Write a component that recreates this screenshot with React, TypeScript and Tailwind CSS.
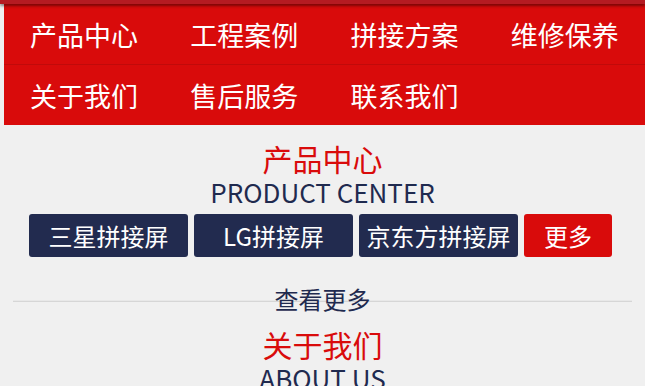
import React from "react";

const cjk = { fontFamily: '"Microsoft YaHei", "Noto Sans CJK SC", "Noto Sans", sans-serif' };

const navRow1 = ["产品中心", "工程案例", "拼接方案", "维修保养"];
const navRow2 = ["关于我们", "售后服务", "联系我们"];

export default function App() {
  return (
    <div className="w-[645px] h-[386px] overflow-hidden bg-[#f0f0f0]" style={cjk}>
      <div className="h-[4px] bg-[#b51b22] shadow-[0_2px_3px_rgba(0,0,0,0.45)] relative z-10" />
      <div className="ml-[4px] bg-[#d90b0b]">
        <div className="grid grid-cols-4 h-[61px] border-b border-[#c10a0a]">
          {navRow1.map((t) => (
            <div key={t} className="flex items-center pl-[26px] text-white text-[27px] leading-none">
              {t}
            </div>
          ))}
        </div>
        <div className="grid grid-cols-4 h-[60px]">
          {navRow2.map((t) => (
            <div key={t} className="flex items-center pl-[26px] text-white text-[27px] leading-none">
              {t}
            </div>
          ))}
        </div>
      </div>
      <div className="flex flex-col items-center pt-[15px]">
        <div className="text-[30px] leading-[36px] text-[#d90b0b]">产品中心</div>
        <div className="text-[26px] leading-[32px] text-[#1f2a4f]">PRODUCT CENTER</div>
        <div className="flex gap-[6px] mt-[6px] mr-[4px]">
          <div className="w-[159px] h-[43px] rounded-[3px] bg-[#222b4f] text-white text-[24px] flex items-center justify-center">三星拼接屏</div>
          <div className="w-[159px] h-[43px] rounded-[3px] bg-[#222b4f] text-white text-[24px] flex items-center justify-center">LG拼接屏</div>
          <div className="w-[159px] h-[43px] rounded-[3px] bg-[#222b4f] text-white text-[24px] flex items-center justify-center">京东方拼接屏</div>
          <div className="w-[88px] h-[43px] rounded-[3px] bg-[#d90b0b] text-white text-[24px] flex items-center justify-center">更多</div>
        </div>
      </div>
      <div className="mt-[43px] mx-[13px] h-[2px] bg-[#d6d6d6] border-t border-[#e8e8e8]" />
      <div className="flex flex-col items-center -mt-[18px]">
        <div className="text-[24px] leading-[30px] text-[#1f2a4f]">查看更多</div>
        <div className="text-[30px] leading-[36px] text-[#d90b0b] mt-[12px]">关于我们</div>
        <div className="text-[26px] leading-[32px] text-[#1f2a4f]">ABOUT US</div>
      </div>
    </div>
  );
}
